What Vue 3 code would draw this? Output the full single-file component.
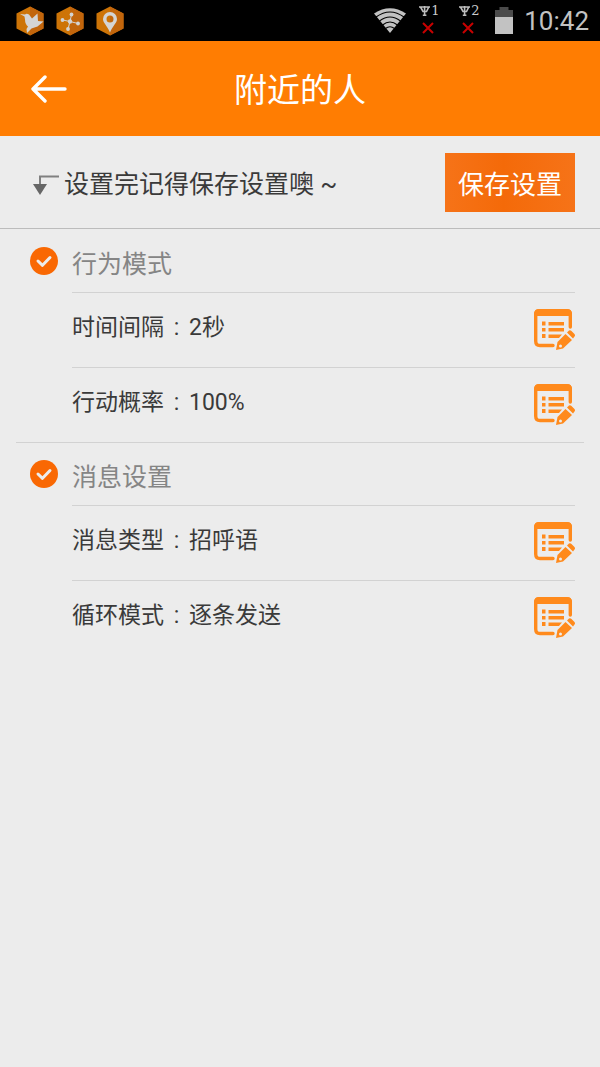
<script setup>
import { reactive } from 'vue'

const sections = reactive([
  {
    id: 'behavior',
    title: '行为模式',
    enabled: true,
    rows: [
      { label: '时间间隔', value: '2秒' },
      { label: '行动概率', value: '100%' },
    ],
  },
  {
    id: 'message',
    title: '消息设置',
    enabled: true,
    rows: [
      { label: '消息类型', value: '招呼语' },
      { label: '循环模式', value: '逐条发送' },
    ],
  },
])
const sims = ['1', '2']
</script>

<template>
  <div class="screen">
    <div class="status">
      <div class="apps">
        <svg class="app" viewBox="0 0 28 30">
          <path class="hex" d="M14 0.5 27.5 7.5V22.5L14 29.5 0.5 22.5V7.5Z" />
          <path class="hexshade" d="M14 0.5 27.5 7.5V22.5L14 29.5Z" />
          <path class="glyph" d="M4 8 9 8.500Q10.500 6.800 13 8.500L16 12.500 21.500 7.500 22 15 27.500 15.500 21.500 20.500 15.500 22.500 11 27 10.500 23 12 20.500Q9 18 9 13.500L8.500 10.500Z" />
        </svg>
        <svg class="app" viewBox="0 0 28 30">
          <path class="hex" d="M14 0.5 27.5 7.5V22.5L14 29.5 0.5 22.5V7.5Z" />
          <path class="hexshade" d="M14 0.5 27.5 7.5V22.5L14 29.5Z" />
          <path class="wire" d="M15.500 8.500 14 15.500 6.500 14M22 17.500 14 15.500 12 23" />
          <circle class="glyph" cx="15.500" cy="8.500" r="1.900" />
          <circle class="glyph" cx="6.500" cy="14" r="1.900" />
          <circle class="glyph" cx="22" cy="17.500" r="1.900" />
          <circle class="glyph" cx="12" cy="23" r="1.900" />
          <circle class="glyph" cx="14" cy="15.500" r="2.200" />
        </svg>
        <svg class="app" viewBox="0 0 28 30">
          <path class="hex" d="M14 0.5 27.5 7.5V22.5L14 29.5 0.5 22.5V7.5Z" />
          <path class="hexshade" d="M14 0.5 27.5 7.5V22.5L14 29.5Z" />
          <path class="glyph" fill-rule="evenodd" d="M14 6A7 7 0 0 1 21 13C21 17 16.500 20 14 26.500 11.500 20 7 17 7 13A7 7 0 0 1 14 6ZM14 9.500A3.500 3.500 0 1 0 14 16.500 3.500 3.500 0 1 0 14 9.500Z" />
        </svg>
      </div>
      <div class="system">
        <svg class="wifi" viewBox="0 0 32 25">
          <path fill="#c2c2c2" d="M0 5.500Q16-5 32 5.500L16 25Z" />
          <path d="M2 9Q16-1 30 9M5.500 13Q16 5 26.500 13M8.500 17Q16 11 23.500 17M11.500 20.500Q16 17 20.500 20.500" fill="none" stroke="#000" stroke-width="1.100" />
        </svg>
        <div v-for="sim in sims" :key="sim" class="sim">
          <div class="simtop">
            <svg class="antenna" viewBox="0 0 12 10">
              <path d="M0 1H11M1.500 1 4 5.500H7.500L9.800 1M5.600 0V10M3.800 9.300H7.400" />
            </svg>
            <span class="simno">{{ sim }}</span>
          </div>
          <svg class="cross" viewBox="0 0 12 12"><path d="M1 1 11 11M11 1 1 11" /></svg>
        </div>
        <svg class="battery" viewBox="0 0 18 27">
          <path fill="#4b4b4b" d="M0 3H4.500V0H13.500V3H18V10H0Z" />
          <path fill="#c2c2c2" d="M0 10H18V27H0Z" />
        </svg>
        <span class="clock">10:42</span>
      </div>
    </div>

    <header class="header">
      <button class="back" type="button" aria-label="返回">
        <svg viewBox="0 0 36 28"><path d="M14 2 2 14 14 26M2 14H34" /></svg>
      </button>
      <h1>附近的人</h1>
    </header>

    <div class="savebar">
      <svg class="hook" viewBox="0 0 26 22">
        <path d="M26 2.500H7V12" fill="none" stroke="#808080" stroke-width="2" />
        <path d="M0 10H14L7 21Z" fill="#666" />
      </svg>
      <p>设置完记得保存设置噢 ~</p>
      <button class="save" type="button">保存设置</button>
    </div>

    <main>
      <section v-for="section in sections" :key="section.id">
        <label class="sectionhead">
          <input v-model="section.enabled" type="checkbox" />
          <svg class="tick" viewBox="0 0 28 28">
            <circle cx="14" cy="14" r="14" />
            <path d="M8 14 12.500 18.300 20 10.500" />
          </svg>
          <span>{{ section.title }}</span>
        </label>
        <div v-for="row in section.rows" :key="row.label" class="row">
          <p>{{ row.label }}<span class="colon">:</span>{{ row.value }}</p>
          <button class="edit" type="button" :aria-label="'编辑' + row.label">
            <svg viewBox="-1 0 42 42">
              <path fill="none" stroke="#ff8a1c" stroke-width="3.400" stroke-linecap="round" d="M19 36.500H6Q1.700 36.500 1.700 32V5.500Q1.700 2 5 2H33Q36.300 2 36.300 5.500V18" />
              <path fill="#ff8a1c" d="M0 7V5Q0 0 5 0H33Q38 0 38 5V7Z" />
              <path fill="#ff8a1c" d="M8 12.500H11.500V16.500H8ZM8 19H11.500V22.500H8ZM8 25H11.500V29H8ZM14.500 13H30V16.500H14.500ZM14.500 19H30V22.500H14.500ZM14.500 25.500H28L25 29H14.500Z" />
              <path fill="#ff8a1c" fill-rule="evenodd" d="M31.500 25 38 31 29 39.500 22 41 23.500 33ZM26.500 35.500A1.500 1.500 0 1 0 26.500 38.500 1.500 1.500 0 1 0 26.500 35.500Z" />
              <path fill="#ff8a1c" d="M33 23.500 35 21.500Q36.500 21 37.500 22L40.500 25Q41.500 26.500 40.500 27.500L39 29.500Z" />
            </svg>
          </button>
        </div>
      </section>
    </main>
  </div>
</template>

<style>
body {
  margin: 0;
  background: #ececec;
}
</style>

<style scoped>
.screen {
  min-height: 100vh;
  background: #ececec;
  color: #3a3a3a;
  font-family: Roboto, "Noto Sans CJK SC", sans-serif;
}
svg {
  display: block;
}
p, h1 {
  margin: 0;
  font-weight: 400;
}
button {
  padding: 0;
  border: 0;
  background: none;
  font-family: inherit;
  cursor: pointer;
}
.status {
  display: flex;
  align-items: center;
  justify-content: space-between;
  height: 41px;
  padding: 0 11px 0 16px;
  background: #000;
}
.apps {
  display: flex;
  gap: 12px;
}
.app {
  width: 28px;
  height: 30px;
}
.hex {
  fill: #cd7407;
}
.hexshade {
  fill: #c2650c;
}
.glyph {
  fill: #d4d4d4;
}
.wire {
  fill: none;
  stroke: #d4d4d4;
  stroke-width: 1;
}
.system {
  display: flex;
  align-items: center;
}
.wifi {
  width: 32px;
  height: 25px;
  margin-right: 13px;
}
.sim {
  width: 20px;
  height: 32px;
  margin-right: 20px;
}
.sim:nth-of-type(2) {
  margin-right: 16px;
}
.simtop {
  display: flex;
  align-items: center;
  height: 12px;
}
.antenna {
  flex: none;
  width: 12px;
  height: 10px;
  fill: none;
  stroke: #bdbdbd;
  stroke-width: 1.6;
}
.simno {
  color: #cacaca;
  font: 400 13px/12px "DejaVu Serif", serif;
}
.cross {
  width: 12px;
  height: 12px;
  margin: 5px 0 0 3px;
  fill: none;
  stroke: #c80000;
  stroke-width: 2;
}
.battery {
  width: 18px;
  height: 27px;
  margin-right: 11px;
}
.clock {
  color: #c2c2c2;
  font-size: 26px;
  line-height: 40px;
}
.header {
  display: grid;
  grid-template-columns: 36px 1fr 36px;
  align-items: center;
  height: 95px;
  padding: 0 31px;
  background: #ff7d02;
  color: #fff;
}
.back svg {
  width: 36px;
  height: 28px;
  fill: none;
  stroke: #fff;
  stroke-width: 3.4;
  stroke-linecap: round;
  stroke-linejoin: round;
}
h1 {
  padding-top: 4px;
  font-size: 33px;
  line-height: 48px;
  text-align: center;
}
.savebar {
  display: flex;
  align-items: center;
  height: 92px;
  padding: 0 25px 0 33px;
  border-bottom: 1px solid #bcbcbc;
}
.hook {
  width: 26px;
  height: 22px;
  margin: 6px 5px 0 0;
}
.savebar p {
  flex: 1;
  padding-top: 6px;
  font-size: 25px;
  line-height: 36px;
}
.save {
  width: 130px;
  height: 59px;
  background: linear-gradient(90deg, #f67318, #f46a09 45%, #f67318);
  color: #fff;
  font-size: 26px;
}
.sectionhead {
  display: flex;
  align-items: center;
  gap: 14px;
  height: 63px;
  margin: 0 30px;
  color: #858585;
  font-size: 25px;
  line-height: 36px;
}
.sectionhead span {
  padding-top: 8px;
}
.sectionhead input {
  position: absolute;
  opacity: 0;
}
.tick {
  width: 28px;
  height: 28px;
  fill: #f96803;
}
.tick path {
  fill: none;
  stroke: #ececec;
  stroke-width: 3;
  stroke-linecap: round;
  stroke-linejoin: round;
}
input:not(:checked) + .tick {
  fill: #b5b5b5;
}
.row {
  display: flex;
  align-items: center;
  justify-content: space-between;
  height: 74px;
  margin: 0 25px 0 72px;
  border-top: 1px solid #d2d2d2;
}
.row p {
  padding-bottom: 4px;
  font-size: 23px;
  line-height: 34px;
}
.colon {
  display: inline-block;
  width: 25px;
  text-align: center;
}
.edit svg {
  width: 42px;
  height: 42px;
}
section + section::before {
  content: "";
  display: block;
  height: 1px;
  margin: 0 16px;
  background: #d2d2d2;
}
section + section .sectionhead {
  height: 62px;
}
</style>
